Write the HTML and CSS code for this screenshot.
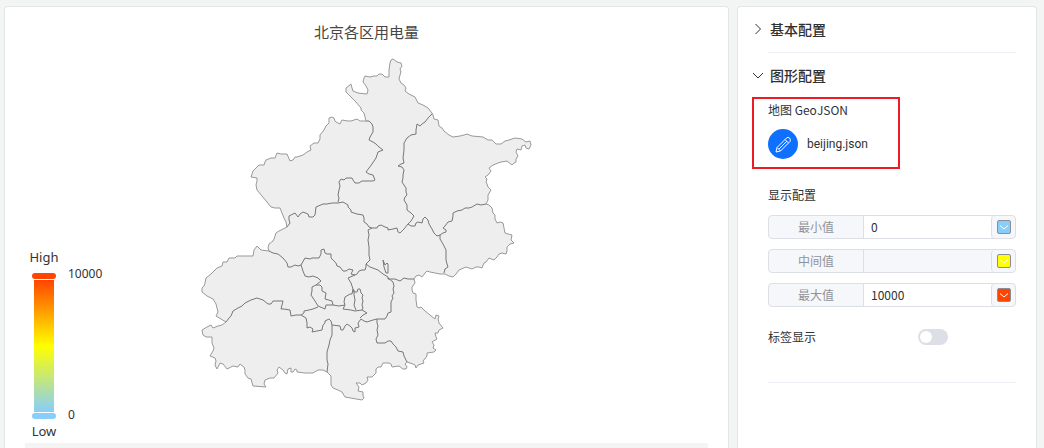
FILE: index.html
```html
<!DOCTYPE html>
<html lang="zh-CN">
<head>
<meta charset="utf-8">
<meta name="viewport" content="width=device-width, initial-scale=1">
<title>北京各区用电量</title>
<link rel="stylesheet" href="styles.css">
</head>
<body>
<div class="workspace">
  <main class="card preview">
    <h1 class="chart-title">北京各区用电量</h1>
    <div class="chart">
      <div class="legend">
        <div class="legend-scale">
          <span class="legend-text legend-high">High</span>
          <span class="handle handle-high"></span>
          <span class="gradient"></span>
          <span class="handle handle-low"></span>
          <span class="legend-text legend-low">Low</span>
        </div>
        <div class="legend-values"><span>10000</span><span>0</span></div>
      </div>
      <svg class="map" viewBox="194 50 345 360" role="img" aria-label="北京地图">
        <path class="land" d="M390 63L391 60L393 59L397 62L401 63L402 66L400 69L401 72L400 75L399 79L401 83L404 85L406 88L405 91L409 94L415 97L418 103L423 105L428 108L432 113L433 115L434 119L438 120L439 126L442 128L444 131L449 135L453 137L460 136L464 135L467 134L472 136L483 137L488 140L492 140L496 144L501 144L505 141L509 140L515 138L522 139L526 142L530 141L531 145L529 149L526 148L525 145L522 146L521 150L517 149L516 152L518 156L516 159L516 162L514 163L512 165L507 161L501 162L498 163L493 165L489 168L491 171L488 175L485 177L487 179L486 182L487 184L488 187L491 190L488 195L488 200L486 204L489 205L492 208L493 213L495 215L495 219L497 223L500 222L503 223L504 228L505 233L508 234L512 235L511 240L514 243L510 244L507 247L507 251L506 254L502 253L499 254L497 257L494 260L489 258L486 262L484 263L482 268L479 267L476 267L472 269L466 267L459 270L456 274L453 277L449 276L445 274L440 274L435 273L430 272L427 271L425 273L422 277L419 275L416 276L414 279L415 283L412 287L412 290L413 293L416 294L416 300L417 307L419 308L421 307L425 311L430 315L435 319L436 315L439 316L438 319L439 323L443 328L439 330L438 333L435 333L436 337L437 339L432 342L434 345L433 348L436 350L434 352L427 353L427 356L423 361L424 363L418 365L416 368L415 365L413 364L407 362L405 364L407 367L406 369L403 369L399 366L392 367L391 364L389 363L383 363L381 367L378 367L376 369L376 373L372 377L367 377L368 380L366 383L362 385L360 383L356 383L359 387L358 391L363 392L363 396L364 398L362 400L345 397L342 392L338 390L333 388L331 385L331 376L327 372L323 370L318 370L313 373L305 373L297 372L297 370L295 369L293 372L291 372L291 368L288 369L287 374L285 373L283 370L279 367L277 370L278 373L274 378L270 378L265 380L264 384L266 387L253 386L251 379L248 378L245 374L245 370L244 367L240 364L238 367L233 366L227 369L223 364L220 363L217 369L215 365L216 361L215 358L210 356L213 351L214 348L212 343L212 337L206 337L203 335L202 330L207 327L211 325L213 328L218 326L222 325L226 322L216 316L218 312L217 308L216 304L213 299L207 296L202 292L202 288L204 286L205 283L206 278L211 274L217 268L222 266L223 262L227 262L229 258L235 258L237 256L246 256L253 256L254 250L257 246L261 250L269 251L268 248L269 244L273 241L274 239L276 233L279 231L283 229L287 227L286 222L284 218L282 213L280 208L275 208L271 207L267 202L262 196L257 190L256 185L257 181L257 178L251 177L253 171L259 165L264 165L265 162L266 160L271 158L275 158L277 153L281 154L287 154L290 161L293 160L295 157L297 157L303 155L307 152L311 150L310 146L314 143L318 143L320 139L320 135L324 130L326 126L329 123L329 118L332 117L334 118L335 121L336 122L340 124L341 122L342 120L348 121L351 121L357 119L360 121L366 121L364 113L361 110L361 108L355 101L350 96L346 92L346 88L351 84L352 88L353 91L358 93L367 94L368 90L366 86L363 82L364 78L365 76L370 77L374 76L377 76L379 74L382 74L385 77L389 77L389 70Z"/>
        <g class="borders">
          <path d="M366 121L369 121L372 124L373 127L373 132L370 137L369 140L373 142L376 144L379 147L383 150L378 152L376 158L372 164L369 168L366 172L369 174L373 175L375 180L373 181L368 181L362 181L359 183L355 183L353 180L352 178L346 178L344 180L341 179L339 182L340 186L339 190L338 195L339 198L338 202"/>
          <path d="M287 227L290 223L289 220L289 216L295 213L298 217L300 214L303 212L308 214L309 217L313 217L315 215L316 207L323 204L327 204L332 203L338 203L343 202L348 205L348 207L351 210L351 212L357 214L363 215L364 218L364 222L367 224L369 227L372 228L377 228L378 226L381 225L385 227L388 228L388 230L393 229L397 228L398 232L400 233L404 229L408 224L411 221L414 216L411 213L407 210L407 205L404 200L405 197L407 195L406 192L406 188L404 185L402 182L403 178L403 175L404 170L402 167L398 166L401 164L404 163L403 158L404 150L404 143L407 138L411 135L416 134L416 130L417 124L420 126L422 124L425 122L428 118L432 114"/>
          <path d="M408 224L411 226L415 226L416 223L418 222L422 223L423 219L425 217L428 220L429 224L432 229L434 233L437 236L440 235L443 233L446 232L446 230L443 228L445 226L448 222L452 221L453 216L453 213L457 211L462 210L465 208L469 208L472 207L477 204L481 205L486 204M440 235L440 239L443 244L446 250L446 255L446 260L447 264L448 267L445 269L444 273"/>
          <path d="M372 228L368 230L369 235L368 240L369 247L369 255L370 260L366 264L370 267L378 270L383 274L388 277L388 279L395 279L400 281L404 278L408 279L414 279"/>
          <path d="M383 260L384 267L386 273L388 273L388 264L387 263L385 265Z"/>
          <path d="M366 264L366 267L365 270L362 270L359 271L357 274L355 275L351 274L353 270L349 269L346 271L343 271L340 267L337 266L336 263L333 260L331 258L331 254L327 254L325 253L324 249L321 250L321 254L319 258L312 258L310 259L305 258L301 265L298 266L295 265L291 267L288 267L287 263L283 258L278 254L273 253L269 251"/>
          <path d="M301 265L303 271L305 276L309 277L313 276L318 278L321 281L316 285L312 287L312 291L311 295L315 301L318 306L325 309L326 305L333 305L332 301L325 299L326 293L322 291L322 287L320 285L316 285"/>
          <path d="M333 305L339 306L345 305L344 302L345 297L350 294L352 294L353 289L351 283L348 278L355 275M353 289L354 292L357 292L358 289L360 289L361 293L363 295L362 298L363 301L362 305L363 308L362 310L355 311L351 310L343 309L345 305M354 290L354 295L355 300L354 305L356 310M362 310L367 313L363 315L360 318"/>
          <path d="M318 307L313 309L309 310L304 311L304 313L301 315L296 315L291 316L290 310L284 309L281 309L282 305L283 301L273 301L271 304L268 304L263 300L257 298L251 300L245 303L242 306L238 308L233 311L231 316L229 318L226 322"/>
          <path d="M301 315L306 318L307 323L307 328L310 327L313 329L312 332L317 331L322 330L323 325L325 323L325 321L329 319L331 321L332 325L340 326L341 330L343 330L345 326L347 324L350 326L352 328L353 331L355 332L355 328L359 327L358 323L361 319L364 321L367 322L373 320L377 319L385 319L387 316L388 313L391 312L391 307L391 302L393 298L392 296L394 293L393 289L394 286L393 282L388 278"/>
          <path d="M332 325L332 330L332 335L330 340L329 345L327 352L327 360L328 364L327 372M377 319L377 323L378 326L377 330L378 335L376 339L377 343L385 343L388 341L391 341L393 344L396 347L398 351L403 352L404 356L407 362"/>
        </g>
      </svg>
    </div>
    <div class="preview-footer"></div>
  </main>

  <aside class="card settings">
    <h2 class="group-title"><button type="button" class="toggle" aria-expanded="false">
      <svg class="arrow" viewBox="0 0 12 12"><path d="M3.500 1L8.500 6L3.500 11"/></svg>基本配置</button></h2>
    <hr class="divider">
    <h2 class="group-title"><button type="button" class="toggle" aria-expanded="true">
      <svg class="arrow" viewBox="0 0 12 12"><path d="M1 4L6 9L11 4"/></svg>图形配置</button></h2>

    <section class="geo">
      <h3 class="label">地图 GeoJSON</h3>
      <div class="file">
        <button type="button" class="edit" aria-label="编辑">
          <svg viewBox="0 0 18 18"><path d="M2 17L3 12.500L12.500 3Q14 1.500 15.500 3T16 6.500L6.500 16ZM3 12.500L6.500 16M11 4.500L14.500 8M5 14L13 6"/></svg>
        </button>
        <span class="file-name">beijing.json</span>
      </div>
    </section>

    <section class="display">
      <h3 class="label">显示配置</h3>
      <div class="field">
        <label for="min">最小值</label>
        <input id="min" type="text" value="0">
        <button type="button" class="picker" aria-label="最小值颜色"><span class="swatch swatch-blue"><svg viewBox="0 0 10 10"><path d="M1 3.500L5 7L9 3.500"/></svg></span></button>
      </div>
      <div class="field">
        <label for="mid">中间值</label>
        <input id="mid" type="text" disabled>
        <button type="button" class="picker" aria-label="中间值颜色"><span class="swatch swatch-yellow"><svg viewBox="0 0 10 10"><path d="M1 3.500L5 7L9 3.500"/></svg></span></button>
      </div>
      <div class="field">
        <label for="max">最大值</label>
        <input id="max" type="text" value="10000">
        <button type="button" class="picker" aria-label="最大值颜色"><span class="swatch swatch-red"><svg viewBox="0 0 10 10"><path d="M1 3.500L5 7L9 3.500"/></svg></span></button>
      </div>
    </section>

    <div class="switch-row">
      <label class="label" for="show-label">标签显示</label>
      <input class="switch" id="show-label" type="checkbox" role="switch">
    </div>
    <hr class="divider">
  </aside>
</div>
</body>
</html>
```
FILE: styles.css
```css
* {
  box-sizing: border-box;
}

body {
  margin: 0;
  background: #f3f4f4;
  color: #303133;
  font: 12px/20px "Noto Sans CJK SC", sans-serif;
}

h1, h2, h3, hr {
  margin: 0;
}

button, input {
  font: inherit;
  color: inherit;
}

button {
  padding: 0;
  border: 0;
  background: none;
  cursor: pointer;
}

.workspace {
  display: grid;
  grid-template-columns: minmax(0, 1fr) 300px;
  gap: 8px;
  min-height: 100vh;
  padding: 6px 7px 0 4px;
}

.card {
  border: 1px solid #e3e6e6;
  border-bottom: 0;
  border-radius: 4px 4px 0 0;
  background: #fff;
}

.preview {
  display: flex;
  flex-direction: column;
  padding: 15px 20px 0;
}

.chart-title {
  color: #464646;
  font-size: 15px;
  font-weight: 400;
  line-height: 20px;
  text-align: center;
}

.chart {
  display: grid;
  grid-template-columns: 1fr minmax(0, 345px) 1fr;
  padding-top: 8px;
}

.map {
  display: block;
  width: 100%;
}

.land {
  fill: #eee;
  stroke: #999;
  stroke-width: 1;
  stroke-linejoin: round;
}

.borders {
  fill: none;
  stroke: #777;
  stroke-width: 1;
  stroke-linejoin: round;
}

.legend {
  display: flex;
  align-self: end;
  gap: 10px;
  margin-bottom: -31px;
  padding-left: 5px;
  color: #333;
  font-family: "Noto Sans", sans-serif;
}

.legend-scale {
  display: flex;
  flex-direction: column;
  align-items: center;
  width: 28px;
}

.legend-text {
  font-size: 13px;
  line-height: 20px;
}

.legend-high {
  padding-bottom: 6px;
}

.legend-low {
  padding-top: 2px;
}

.handle {
  width: 24px;
  height: 6px;
  border-radius: 3px;
}

.handle-high {
  background: #ff4500;
}

.handle-low {
  background: #87cefa;
}

.gradient {
  width: 20px;
  height: 132px;
  margin: 1px 0;
  background: linear-gradient(#ff4500, #ff0, #87cefa);
}

.legend-values {
  display: flex;
  flex-direction: column;
  justify-content: space-between;
  padding: 17px 0 16px;
}

.preview-footer {
  flex: 1;
  min-height: 5px;
  margin-top: 33px;
  background: #f4f4f4;
}

.settings {
  padding: 12px 20px 0 30px;
}

.group-title {
  font-size: 14px;
  font-weight: 500;
  line-height: 20px;
}

.toggle {
  display: flex;
  align-items: center;
  gap: 6px;
  margin-left: -16px;
}

.arrow {
  width: 12px;
  height: 12px;
  fill: none;
  stroke: #303133;
}

.divider {
  border: 0;
  border-top: 1px solid #ebeef5;
}

.group-title + .divider {
  margin: 13px 0 12px;
}

.label {
  font-size: 12px;
  font-weight: 400;
  line-height: 20px;
}

.geo {
  width: 148px;
  margin: 12px 0 16px -16px;
  padding: 1px 14px 8px;
  border: 2px solid #ed1c24;
}

.file {
  display: flex;
  align-items: center;
  gap: 9px;
  padding-top: 9px;
}

.file-name {
  font-family: Roboto, sans-serif;
}

.edit {
  display: grid;
  place-items: center;
  width: 30px;
  height: 30px;
  border-radius: 50%;
  background: #0f6fff;
}

.edit svg {
  width: 18px;
  height: 18px;
  fill: none;
  stroke: #fff;
}

.display {
  display: grid;
  gap: 10px;
}

.field {
  display: grid;
  grid-template-columns: 95px minmax(0, 1fr) 24px;
  height: 24px;
  border: 1px solid #dcdfe6;
  border-radius: 4px;
  background: #f5f7fa;
}

.field label {
  color: #909399;
  line-height: 22px;
  text-align: center;
  border-right: 1px solid #dcdfe6;
}

.field input {
  width: 100%;
  padding: 0 7px;
  border: 0;
  background: #fff;
  outline: 0;
}

.field input:disabled {
  background: #f5f7fa;
}

.picker {
  display: grid;
  place-items: center;
  border-left: 1px solid #dcdfe6;
  border-radius: 4px;
}

.swatch {
  display: grid;
  place-items: center;
  width: 14px;
  height: 14px;
  border: 1px solid #8b8e95;
  border-radius: 2px;
}

.swatch svg {
  width: 10px;
  height: 10px;
  fill: none;
  stroke: #fff;
}

.swatch-blue {
  background: #87cefa;
}

.swatch-yellow {
  background: #ff0;
}

.swatch-red {
  background: #ff4500;
}

.switch-row {
  display: grid;
  grid-template-columns: 150px 1fr;
  align-items: center;
  padding: 20px 0 35px;
}

.switch {
  appearance: none;
  display: flex;
  align-items: center;
  width: 30px;
  height: 16px;
  margin: 0;
  padding: 2px;
  border-radius: 8px;
  background: #dcdfe6;
}

.switch::before {
  content: "";
  width: 12px;
  height: 12px;
  border-radius: 50%;
  background: #fff;
}

.switch:checked {
  justify-content: flex-end;
  background: #0f6fff;
}
```
